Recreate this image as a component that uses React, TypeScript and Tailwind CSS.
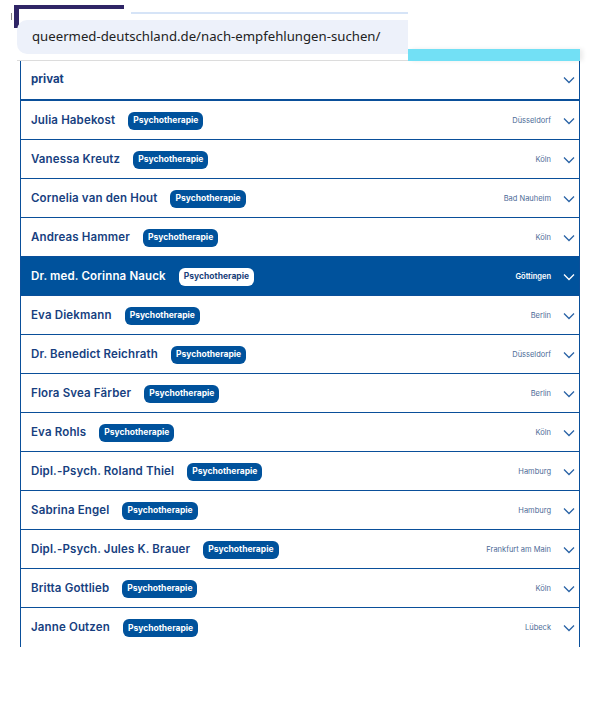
import React from "react";

type Entry = {
    name: string;
    city: string;
    active?: boolean;
};

const entries: Entry[] = [
    { name: "Julia Habekost", city: "Düsseldorf" },
    { name: "Vanessa Kreutz", city: "Köln" },
    { name: "Cornelia van den Hout", city: "Bad Nauheim" },
    { name: "Andreas Hammer", city: "Köln" },
    { name: "Dr. med. Corinna Nauck", city: "Göttingen", active: true },
    { name: "Eva Diekmann", city: "Berlin" },
    { name: "Dr. Benedict Reichrath", city: "Düsseldorf" },
    { name: "Flora Svea Färber", city: "Berlin" },
    { name: "Eva Rohls", city: "Köln" },
    { name: "Dipl.-Psych. Roland Thiel", city: "Hamburg" },
    { name: "Sabrina Engel", city: "Hamburg" },
    { name: "Dipl.-Psych. Jules K. Brauer", city: "Frankfurt am Main" },
    { name: "Britta Gottlieb", city: "Köln" },
    { name: "Janne Outzen", city: "Lübeck" },
];

const Chevron = ({ className }: { className?: string }) => (
    <svg viewBox="0 0 12 8" className={className} fill="none" stroke="currentColor" strokeWidth="1.3">
        <path d="M1 1.5l5 5 5-5" />
    </svg>
);

const Row: React.FC<{ entry: Entry; last?: boolean }> = ({ entry, last }) => {
    const active = entry.active;
    return (
        <div
            className={
                "h-[39px] flex items-center pl-[10px] pr-[4px] pt-[1px] border-[#0a4f9a] " +
                (last ? "" : "border-b ") +
                (active ? "bg-[#00529c]" : "bg-white")
            }>
            <span className={"text-[11.5px] font-semibold tracking-[0.15px] " + (active ? "text-white" : "text-[#173f80]")}>{entry.name}</span>
            <span
                className={
                    "ml-[13px] h-[18px] px-[5px] flex items-center rounded-[6px] text-[8.5px] font-bold " +
                    (active ? "bg-white text-[#1a3f7a]" : "bg-[#00529c] text-white")
                }>
                Psychotherapie
            </span>
            <span className={"ml-auto text-[7.5px] " + (active ? "text-white font-semibold" : "text-[#4d6b97]")}>{entry.city}</span>
            <Chevron className={"w-[12px] h-[8px] ml-[12px] " + (active ? "text-white" : "text-[#2a63a6]")} />
        </div>
    );
};

export default function App() {
    return (
        <div className="w-[607px] h-[702px] bg-white relative overflow-hidden" style={{ fontFamily: "Inter, 'Noto Sans', sans-serif" }}>
            {/* leftover browser chrome decorations */}
            <div className="absolute left-[14px] top-[5px] w-[110px] h-[23px] border-t-4 border-l-[5px] border-[#2f2566]" />
            <div className="absolute left-[11px] top-[13px] w-[1px] h-[7px] bg-[#888]" />
            <div className="absolute left-[131px] top-[12px] w-[277px] h-[2px] bg-[#d6e4f7]" />

            <div className="pt-[20px] pl-[17px] flex items-end">
                <div className="w-[391px] flex flex-col">
                    <div className="relative h-[34px] bg-[#edf1fa] flex items-center pl-[15px] rounded-l-[10px]">
                        <span className="text-[13.2px] text-[#222] whitespace-nowrap" style={{ fontFamily: "'Noto Sans', sans-serif" }}>
                            queermed-deutschland.de/nach-empfehlungen-suchen/
                        </span>
                    </div>
                    <div className="h-[6px] bg-white" />
                    <div className="h-[1px] bg-[#dcdcdc]" />
                </div>
                <div className="w-[172px] h-[12px] bg-[#72e0f5] shadow-[3px_0_4px_rgba(0,0,0,0.08)]" />
            </div>

            <div className="ml-[20px] w-[560px] border-x border-[#0a4f9a]">
                <div className="h-[40px] flex items-center pl-[10px] pr-[4px] border-b-2 border-[#0a4f9a]">
                    <span className="text-[11.5px] font-bold text-[#173f80]">privat</span>
                    <Chevron className="ml-auto w-[12px] h-[8px] text-[#2a63a6]" />
                </div>
                {entries.map((entry, idx) => (
                    <Row key={idx} entry={entry} last={idx === entries.length - 1} />
                ))}
            </div>
        </div>
    );
}
